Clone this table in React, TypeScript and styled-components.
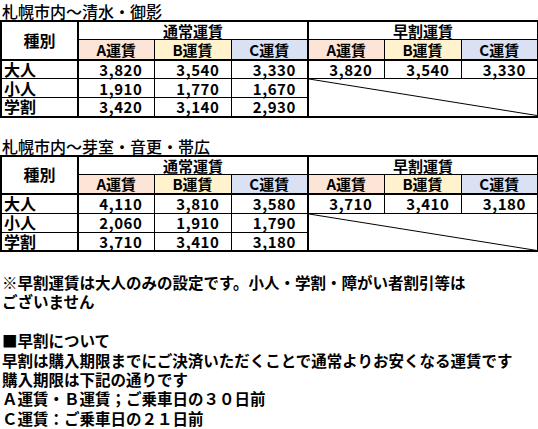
import React from "react";
import styled, { createGlobalStyle } from "styled-components";

const GlobalStyle = createGlobalStyle`
    html, body {
        margin: 0;
        padding: 0;
        background: #ffffff;
    }
    body {
        font-family: "Noto Sans CJK JP", "Noto Sans", sans-serif;
        color: #000000;
    }
`;

type Tone = "a" | "b" | "c";

const toneColors: Record<Tone, string> = {
    a: "#fce4d6",
    b: "#fff2cc",
    c: "#d9e1f2",
};

interface FareRow {
    label: string;
    normal: string[];
    early?: string[];
}

interface FareTableProps {
    title: string;
    rows: FareRow[];
}

const Page = styled.div`
    width: 538px;
    display: flex;
    flex-direction: column;
    padding-top: 2px;
`;

const Section = styled.section`
    display: flex;
    flex-direction: column;
    margin-bottom: 19px;
`;

const Title = styled.h2`
    margin: 0;
    padding-left: 2px;
    font-size: 16px;
    font-weight: 500;
    line-height: 18px;
    height: 18px;
`;

const Table = styled.table`
    width: 537px;
    table-layout: fixed;
    border-collapse: collapse;
    border: 2px solid #000;
`;

const Row = styled.tr<{ $h: number }>`
    height: ${(p) => p.$h}px;
`;

const Cell = styled.td<{ $thickRight?: boolean }>`
    border: 1px solid #000;
    border-right-width: ${(p) => (p.$thickRight ? "2px" : "1px")};
    padding: 0;
    font-size: 15px;
    font-weight: 700;
    line-height: 17px;
    white-space: nowrap;
    overflow: visible;
`;

const TypeHead = styled(Cell).attrs({ as: "th" })`
    text-align: center;
    border-bottom-width: 2px;
    border-right-width: 2px;
    font-size: 16px;
`;

const GroupHead = styled(Cell).attrs({ as: "th" })`
    text-align: center;
    font-size: 15px;
`;

const FareHead = styled(Cell).attrs({ as: "th" })<{ $tone: Tone }>`
    background: ${(p) => toneColors[p.$tone]};
    border-bottom-width: 2px;
    text-align: center;
    font-size: 15px;
`;

const Label = styled(Cell).attrs({ as: "th" })`
    text-align: left;
    padding-left: 2px;
    border-right-width: 2px;
    font-size: 16px;
`;

const Amount = styled(Cell)`
    text-align: right;
    padding-right: 11px;
    letter-spacing: 0.6px;
`;

const Slashed = styled(Cell)`
    position: relative;
`;

const SlashLine = styled.svg`
    position: absolute;
    inset: 0;
    width: 100%;
    height: 100%;
`;

const Notes = styled.div`
    display: flex;
    flex-direction: column;
    padding-left: 2px;
    margin-top: 2px;
    font-size: 15.5px;
    font-weight: 700;
    line-height: 19.4px;
`;

const NoteLine = styled.div<{ $gap?: boolean }>`
    white-space: nowrap;
    margin-top: ${(p) => (p.$gap ? "19.4px" : "0")};
`;

const tones: Tone[] = ["a", "b", "c"];
const toneNames = ["A運賃", "B運賃", "C運賃"];

const FareTable: React.FC<FareTableProps> = ({ title, rows }) => (
    <Section>
        <Title>{title}</Title>
        <Table>
            <colgroup>
                <col style={{ width: 77 }} />
                <col style={{ width: 76 }} />
                <col style={{ width: 77 }} />
                <col style={{ width: 77 }} />
                <col style={{ width: 76 }} />
                <col style={{ width: 77 }} />
                <col style={{ width: 77 }} />
            </colgroup>
            <thead>
                <Row $h={18}>
                    <TypeHead rowSpan={2}>種別</TypeHead>
                    <GroupHead colSpan={3} $thickRight>通常運賃</GroupHead>
                    <GroupHead colSpan={3}>早割運賃</GroupHead>
                </Row>
                <Row $h={20}>
                    {[0, 1].map((g) =>
                        tones.map((t, i) => (
                            <FareHead key={`${g}-${t}`} $tone={t} $thickRight={g === 0 && i === 2}>
                                {toneNames[i]}
                            </FareHead>
                        ))
                    )}
                </Row>
            </thead>
            <tbody>
                {rows.map((row, r) => (
                    <Row $h={19} key={row.label}>
                        <Label>{row.label}</Label>
                        {row.normal.map((v, i) => (
                            <Amount key={i} $thickRight={i === 2}>{v}</Amount>
                        ))}
                        {row.early
                            ? row.early.map((v, i) => <Amount key={`e${i}`}>{v}</Amount>)
                            : r === 1 && (
                                  <Slashed colSpan={3} rowSpan={rows.length - 1}>
                                      <SlashLine viewBox="0 0 100 100" preserveAspectRatio="none">
                                          <line
                                              x1="0"
                                              y1="0"
                                              x2="100"
                                              y2="100"
                                              stroke="#000"
                                              strokeWidth="1"
                                              vectorEffect="non-scaling-stroke"
                                          />
                                      </SlashLine>
                                  </Slashed>
                              )}
                    </Row>
                ))}
            </tbody>
        </Table>
    </Section>
);

const shimizu: FareRow[] = [
    { label: "大人", normal: ["3,820", "3,540", "3,330"], early: ["3,820", "3,540", "3,330"] },
    { label: "小人", normal: ["1,910", "1,770", "1,670"] },
    { label: "学割", normal: ["3,420", "3,140", "2,930"] },
];

const memuro: FareRow[] = [
    { label: "大人", normal: ["4,110", "3,810", "3,580"], early: ["3,710", "3,410", "3,180"] },
    { label: "小人", normal: ["2,060", "1,910", "1,790"] },
    { label: "学割", normal: ["3,710", "3,410", "3,180"] },
];

export default function App() {
    return (
        <Page>
            <GlobalStyle />
            <FareTable title="札幌市内～清水・御影" rows={shimizu} />
            <FareTable title="札幌市内～芽室・音更・帯広" rows={memuro} />
            <Notes>
                <NoteLine>※早割運賃は大人のみの設定です。小人・学割・障がい者割引等は</NoteLine>
                <NoteLine>ございません</NoteLine>
                <NoteLine $gap>■早割について</NoteLine>
                <NoteLine>早割は購入期限までにご決済いただくことで通常よりお安くなる運賃です</NoteLine>
                <NoteLine>購入期限は下記の通りです</NoteLine>
                <NoteLine>Ａ運賃・Ｂ運賃；ご乗車日の３０日前</NoteLine>
                <NoteLine>Ｃ運賃：ご乗車日の２１日前</NoteLine>
            </Notes>
        </Page>
    );
}
